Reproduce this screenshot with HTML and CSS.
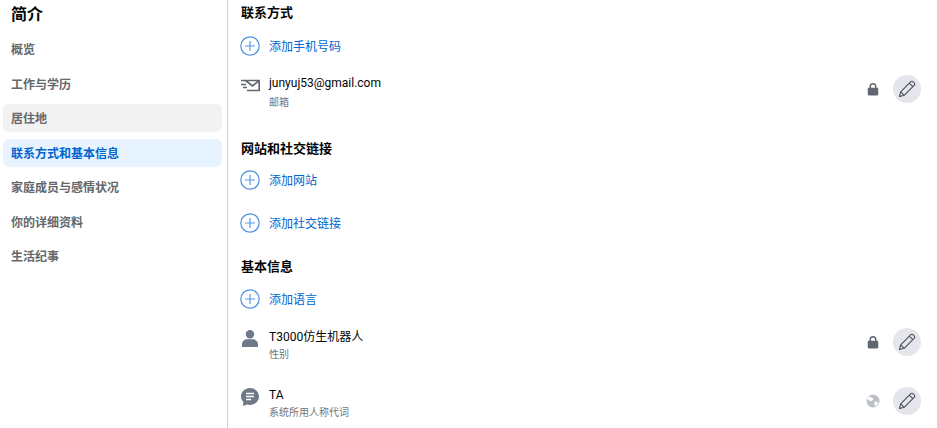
FILE: index.html
```html
<!DOCTYPE html>
<html lang="zh-CN">
<head>
    <meta charset="UTF-8">
    <meta name="viewport" content="width=device-width, initial-scale=1.0">
    <title>简介</title>
    <link rel="stylesheet" href="styles.css">
</head>
<body>
    <svg class="defs" width="0" height="0">
        <symbol id="plus" viewBox="0 0 20 20">
            <circle cx="10" cy="10" r="9.2" fill="none" stroke="#4a90e2" stroke-width="1.2"/>
            <path d="M10 5v10M5 10h10" fill="none" stroke="#5a9ae6" stroke-width="1.2"/>
        </symbol>
        <symbol id="lock" viewBox="0 0 12 12">
            <path d="M3 5V3.8a3 3 0 0 1 6 0V5h.6c.5 0 .9.4.9.9v4.7c0 .5-.4.9-.9.9H2.400c-.5 0-.9-.4-.9-.9V5.900c0-.5.4-.9.9-.9zm1.300 0h3.400V3.800a1.700 1.700 0 0 0-3.400 0z" fill="#606770"/>
        </symbol>
        <symbol id="pencil" viewBox="0 0 18 18">
            <path d="M1.500 16.500l1.200-4.700L12.800 1.700c.6-.6 1.500-.6 2.100 0l1.400 1.400c.6.6.6 1.500 0 2.100L6.200 15.300zM2.700 11.800l3.500 3.500M11.300 3.200l3.500 3.500" fill="none" stroke="#4b4f56" stroke-width="1.100" stroke-linejoin="round"/>
        </symbol>
    </svg>

    <div class="page">
        <aside class="side">
            <h1 class="side-title">简介</h1>
            <ul class="nav">
                <li class="nav-item">概览</li>
                <li class="nav-item">工作与学历</li>
                <li class="nav-item hover">居住地</li>
                <li class="nav-item active">联系方式和基本信息</li>
                <li class="nav-item">家庭成员与感情状况</li>
                <li class="nav-item">你的详细资料</li>
                <li class="nav-item">生活纪事</li>
            </ul>
        </aside>

        <main class="main">
            <section class="group group-contact">
                <h2 class="group-title">联系方式</h2>
                <div class="add"><svg class="add-icon"><use href="#plus"/></svg>添加手机号码</div>
                <div class="row row-mail">
                    <svg class="row-icon" viewBox="0 0 20 20">
                        <path d="M1 5.500h18.200V15.500H7M5.500 5.500l7 5.500 6.700-5.500" fill="none" stroke="#606770" stroke-width="1.700"/>
                        <path d="M1 9.500h5M3 12.500h4" fill="none" stroke="#606770" stroke-width="1.500"/>
                    </svg>
                    <div class="row-text">
                        <div class="row-main">junyuj53@gmail.com</div>
                        <div class="row-sub">邮箱</div>
                    </div>
                    <svg class="privacy"><use href="#lock"/></svg>
                    <div class="edit"><svg class="edit-icon"><use href="#pencil"/></svg></div>
                </div>
            </section>

            <section class="group group-links">
                <h2 class="group-title">网站和社交链接</h2>
                <div class="add"><svg class="add-icon"><use href="#plus"/></svg>添加网站</div>
                <div class="add add-far"><svg class="add-icon"><use href="#plus"/></svg>添加社交链接</div>
            </section>

            <section class="group group-basic">
                <h2 class="group-title">基本信息</h2>
                <div class="add"><svg class="add-icon"><use href="#plus"/></svg>添加语言</div>
                <div class="row row-gender">
                    <svg class="row-icon" viewBox="0 0 20 20">
                        <circle cx="10" cy="5.200" r="4.200" fill="#6f7887"/>
                        <path d="M2 18v-2.700c0-3 2.500-5 5-5h6c2.500 0 5 2 5 5V18z" fill="#6f7887"/>
                    </svg>
                    <div class="row-text">
                        <div class="row-main">T3000仿生机器人</div>
                        <div class="row-sub">性别</div>
                    </div>
                    <svg class="privacy"><use href="#lock"/></svg>
                    <div class="edit"><svg class="edit-icon"><use href="#pencil"/></svg></div>
                </div>
                <div class="row row-pronoun">
                    <svg class="row-icon" viewBox="0 0 20 20">
                        <path d="M10 1c5 0 9 3.800 9 8.500S15 18 10 18c-1.100 0-2.100-.2-3-.5L3 19l.4-4C1.900 13.600 1 11.600 1 9.500 1 4.800 5 1 10 1z" fill="#6f7887"/>
                        <path d="M6 6.500h8M6 9.500h8M6 12.500h5" fill="none" stroke="#fff" stroke-width="1.500"/>
                    </svg>
                    <div class="row-text">
                        <div class="row-main">TA</div>
                        <div class="row-sub">系统所用人称代词</div>
                    </div>
                    <svg class="privacy" viewBox="0 0 14 14">
                        <circle cx="7" cy="7" r="6.500" fill="#bcc0c7"/>
                        <path d="M3 2.500l3 1 1.500 2-2 1.500-2.500-.5-2-1.500zM8 7.500l3.500.5.500 2-2.500 2.500-1-2z" fill="#fff"/>
                    </svg>
                    <div class="edit"><svg class="edit-icon"><use href="#pencil"/></svg></div>
                </div>
            </section>
        </main>
    </div>
</body>
</html>
```

FILE: styles.css
```css
* { box-sizing: border-box; }
html, body { margin: 0; height: 100%; overflow: hidden; }
body { background: #fff; color: #050505; font-family: Roboto, "Noto Sans CJK SC", sans-serif; font-size: 12px; }
.defs { display: block; height: 0; }

.page { display: flex; height: 428px; }

.side { width: 228px; flex: none; border-right: 1px solid #ced0d4; padding: 0 5px 0 3px; }
.side-title { margin: 0; padding: 4px 0 0 8px; height: 35px; font-size: 16px; line-height: 22px; font-weight: 700; }
.nav { list-style: none; margin: 0; padding: 0; display: flex; flex-direction: column; gap: 6.500px; }
.nav-item { height: 28px; padding-left: 8px; border-radius: 6px; font-size: 12px; line-height: 30px; font-weight: 700; color: #65676b; }
.nav-item.hover { background: #f2f2f2; }
.nav-item.active { background: #e7f3ff; color: #0064d1; }

.main { flex: 1; padding: 3px 16px 0 12px; }
.group-contact { margin-bottom: 28px; }
.group-links { margin-bottom: 21px; }
.group-title { margin: 0 0 0 1px; height: 20px; font-size: 13px; line-height: 20px; font-weight: 700; }

.add { display: flex; align-items: center; gap: 9px; height: 28px; margin-top: 8px; color: #0064d1; }
.group-links .add { margin-top: 6px; }
.group-links .add-far { margin-top: 15px; }
.group-basic .add { margin-top: 7px; }
.add-icon { width: 20px; height: 20px; flex: none; margin-top: 2px; }

.row { display: flex; align-items: flex-start; }
.row-mail { margin-top: 16px; }
.row-gender { margin-top: 16px; }
.row-pronoun { margin-top: 24px; }
.row-icon { width: 20px; height: 20px; flex: none; margin-right: 9px; }
.row-gender .row-icon, .row-gender .row-text { margin-top: 1px; }
.row-text { flex: 1; }
.row-main { height: 16px; font-size: 12px; line-height: 16px; }
.row-sub { margin-top: 2px; height: 16px; font-size: 10px; line-height: 16px; color: #727479; }
.row-mail .row-sub { margin-top: 4px; }
.privacy { width: 14px; height: 14px; flex: none; margin: 7px 13px 0 0; }
.edit { width: 28px; height: 28px; flex: none; border-radius: 50%; background: #e4e6eb; display: flex; align-items: center; justify-content: center; }
.edit-icon { width: 18px; height: 18px; }
```
